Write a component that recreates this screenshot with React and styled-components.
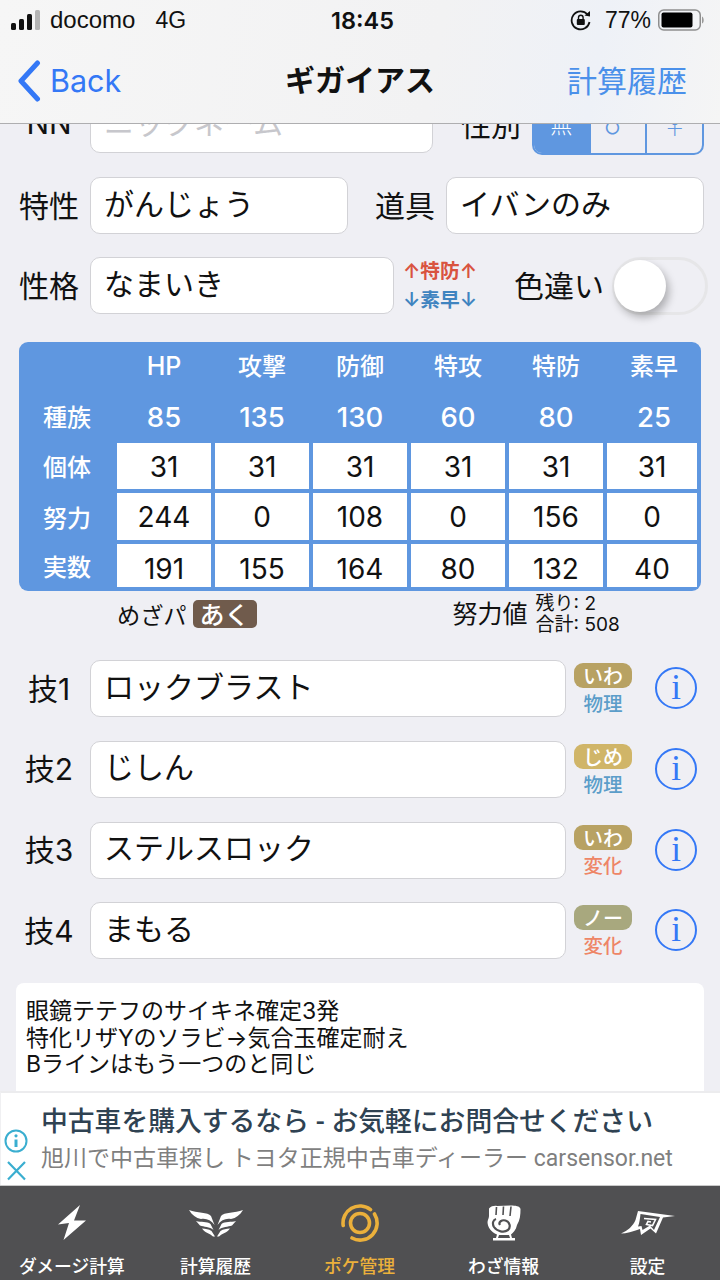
import React from 'react';
import styled, { createGlobalStyle } from 'styled-components';

const SANS = `Inter, "Noto Sans CJK JP", sans-serif`;
const BLUE = '#3478f6';
const TABLE_BLUE = '#5f97e0';

const GlobalStyle = createGlobalStyle`
  html, body { margin: 0; padding: 0; background: #efeff4; }
  * { box-sizing: border-box; }
`;

const Screen = styled.div`
  width: 720px;
  height: 1280px;
  display: flex;
  flex-direction: column;
  overflow: hidden;
  font-family: ${SANS};
  color: #111;
  background: #efeff4;
`;

// header
const Header = styled.header`
  height: 124px;
  flex: none;
  background: linear-gradient(100deg, #f6f6f6 0%, #f2f2f3 60%, #eef1f7 82%, #f5f5f5 100%);
  border-bottom: 1px solid #aeaeb0;
`;
const StatusBar = styled.div`
  height: 40px;
  padding: 0 15px 0 11px;
  display: flex;
  align-items: center;
  position: relative;
`;
const Carrier = styled.span`
  margin-left: 7px;
  font-family: "Liberation Sans", sans-serif;
  font-size: 24px;
`;
const Network = styled.span`
  margin-left: 20px;
  font-family: "Liberation Sans", sans-serif;
  font-size: 23px;
`;
const Clock = styled.span`
  position: absolute;
  left: 5px;
  right: 0;
  text-align: center;
  font-size: 23.5px;
  font-weight: 600;
  pointer-events: none;
`;
const StatusRight = styled.div`
  margin-left: auto;
  display: flex;
  align-items: center;
`;
const Percent = styled.span`
  margin: 0 7px 0 13px;
  font-family: "Liberation Sans", sans-serif;
  font-size: 23px;
`;
const NavBar = styled.nav`
  height: 83px;
  padding: 0 33px 2px 17px;
  display: flex;
  align-items: center;
  position: relative;
`;
const BackLabel = styled.span`
  margin-left: 9px;
  font-size: 30.5px;
  color: ${BLUE};
`;
const NavTitle = styled.h1`
  position: absolute;
  left: 0;
  right: 0;
  margin: 0;
  padding-bottom: 5px;
  text-align: center;
  font-size: 30px;
  font-weight: 700;
`;
const NavAction = styled.span`
  margin-left: auto;
  padding-bottom: 4px;
  font-size: 30px;
  color: #4a90ea;
`;

// scrolled content, sitting 28px past its top
const Main = styled.main`
  flex: 1;
  min-height: 0;
  overflow: hidden;
`;
const ScrollBody = styled.div`
  margin-top: -28px;
`;
const Row = styled.div`
  height: 57px;
  margin-top: ${(p) => p.$top || 0}px;
  padding: 0 16px 0 20px;
  display: flex;
  align-items: center;
`;
const FieldLabel = styled.span`
  flex: none;
  width: ${(p) => p.$width || 58}px;
  margin-left: ${(p) => p.$left || 0}px;
  margin-right: ${(p) => p.$right ?? 12}px;
  padding-bottom: 4px;
  display: flex;
  justify-content: center;
  font-size: 30px;
  white-space: nowrap;
`;
const Field = styled.div`
  flex: none;
  width: ${(p) => p.$width}px;
  height: 57px;
  padding: 0 13px 8px;
  display: flex;
  align-items: center;
  font-size: 30px;
  color: ${(p) => (p.$placeholder ? '#c7c7cc' : '#111')};
  background: #fff;
  border: 1px solid #d2d2d6;
  border-radius: 10px;
  white-space: nowrap;
`;
const GenderGroup = styled.div`
  flex: none;
  width: 172px;
  height: 50px;
  align-self: flex-end;
  margin-bottom: -2px;
  display: flex;
  border: 2px solid ${TABLE_BLUE};
  border-radius: 0 0 10px 10px;
  overflow: hidden;
`;
const GenderOption = styled.div`
  flex: 1;
  display: flex;
  align-items: center;
  justify-content: center;
  padding-bottom: ${(p) => p.$lift}px;
  font-size: ${(p) => p.$size}px;
  font-weight: 300;
  color: ${(p) => (p.$active ? '#fff' : TABLE_BLUE)};
  background: ${(p) => (p.$active ? TABLE_BLUE : 'transparent')};
  & + & { border-left: 2px solid ${TABLE_BLUE}; }
`;
const NatureNotes = styled.div`
  flex: none;
  width: 74px;
  margin-left: 9px;
  display: flex;
  flex-direction: column;
  gap: 6px;
`;
const NatureLine = styled.span`
  font-size: 19.7px;
  line-height: 23px;
  font-weight: 600;
  white-space: nowrap;
  color: ${(p) => p.$color};
`;
const Toggle = styled.div`
  flex: none;
  width: 96px;
  height: 58px;
  margin-left: 1px;
  margin-right: -5px;
  border: 3px solid #e6e6e8;
  border-radius: 29px;
  position: relative;
`;
const ToggleKnob = styled.div`
  position: absolute;
  left: -1px;
  top: 0;
  width: 52px;
  height: 52px;
  border-radius: 50%;
  background: #fff;
  box-shadow: 3px 5px 9px rgba(0, 0, 0, 0.28);
`;

// stats table
const StatTable = styled.div`
  margin: 28px 19px 0;
  padding: 0 4px 4px 0;
  display: grid;
  grid-template-columns: repeat(6, 94px) 90px;
  grid-template-rows: 48px 45px 46px 47px 43px;
  gap: 4px;
  background: ${TABLE_BLUE};
  border-radius: 9px;
  overflow: hidden;
`;
const HeadCell = styled.div`
  display: flex;
  align-items: center;
  justify-content: center;
  font-size: ${(p) => p.$size || 24}px;
  font-weight: 500;
  color: #fff;
  padding-left: ${(p) => p.$shift || 0}px;
  padding-bottom: ${(p) => p.$lift || 0}px;
`;
const ValueCell = styled.div`
  display: flex;
  align-items: center;
  justify-content: center;
  padding-top: ${(p) => p.$nudge || 1}px;
  font-size: 28px;
  background: #fff;
`;

const Summary = styled.div`
  height: 28px;
  margin-top: 9px;
  padding-left: 117px;
  display: flex;
  align-items: center;
`;
const SummaryText = styled.span`
  font-size: 23.2px;
  white-space: nowrap;
`;
const HiddenType = styled.span`
  width: 64px;
  height: 28px;
  margin-left: 6px;
  padding-bottom: 2px;
  display: flex;
  align-items: center;
  justify-content: center;
  font-size: 25px;
  font-weight: 500;
  color: #fff;
  background: #705b4c;
  border-radius: 5px;
`;
const EffortLabel = styled.span`
  margin-left: 196px;
  padding-bottom: 4px;
  font-size: 25px;
  white-space: nowrap;
`;
const EffortTotals = styled.div`
  margin-left: 8px;
  font-size: 19px;
  line-height: 21px;
  white-space: nowrap;
`;

// moves
const MoveList = styled.div`
  margin-top: 32px;
  display: grid;
  row-gap: 23.8px;
`;
const MoveRow = styled.div`
  height: 57px;
  padding-left: 20px;
  display: flex;
`;
const MoveLabel = styled.span`
  width: 58px;
  margin-right: 12px;
  padding-bottom: 4px;
  align-self: center;
  text-align: center;
  font-size: 30px;
  white-space: nowrap;
`;
const MoveMeta = styled.div`
  width: 58px;
  margin-left: 8px;
  padding-top: 3px;
  display: flex;
  flex-direction: column;
  align-items: center;
`;
const TypeBadge = styled.span`
  width: 58px;
  height: 25px;
  display: flex;
  align-items: center;
  justify-content: center;
  font-size: 20px;
  font-weight: 500;
  color: #fff;
  background: ${(p) => p.$color};
  border-radius: 9px;
`;
const Category = styled.span`
  height: 32px;
  display: flex;
  align-items: center;
  font-size: 19.5px;
  font-weight: 500;
  color: ${(p) => (p.$kind === '物理' ? '#5b9dc9' : '#ee8566')};
`;
const InfoButton = styled.div`
  width: 42px;
  height: 42px;
  margin: 7px 0 0 23px;
  display: flex;
  align-items: center;
  justify-content: center;
  font-family: "Liberation Serif", serif;
  font-size: 35px;
  color: ${BLUE};
  border: 2px solid ${BLUE};
  border-radius: 50%;
`;
const Notes = styled.div`
  height: 140px;
  margin: 24px 16px 0;
  padding: 15px 10px;
  font-size: 23px;
  line-height: 26.5px;
  background: #fff;
  border-radius: 8px;
  white-space: pre-line;
`;

// ad banner
const AdBanner = styled.aside`
  height: 94px;
  flex: none;
  padding: 11px 0 0 40px;
  position: relative;
  background: #fff;
  border-top: 2px solid #ececee;
  border-left: 1px solid #f0f0f2;
`;
const AdIcons = styled.div`
  position: absolute;
  left: 3px;
  top: 36px;
  display: flex;
  flex-direction: column;
  gap: 8px;
`;
const AdTitle = styled.div`
  font-family: Roboto, "Noto Sans CJK JP", sans-serif;
  font-size: 26.8px;
  line-height: 36px;
  font-weight: 500;
  color: #2f4252;
  white-space: nowrap;
`;
const AdSub = styled.div`
  margin-top: 4px;
  font-family: Roboto, "Noto Sans CJK JP", sans-serif;
  font-size: 23px;
  line-height: 30px;
  color: #7f7f7f;
  white-space: nowrap;
`;

// tab bar
const TabBar = styled.footer`
  height: 95px;
  flex: none;
  display: grid;
  grid-template-columns: 144px 143px 145px 143px 145px;
  background: #505052;
  border-top: 1px solid #c9c9c9;
`;
const Tab = styled.div`
  display: flex;
  flex-direction: column;
  align-items: center;
  color: ${(p) => (p.$active ? '#ebb03b' : '#fff')};
`;
const TabIcon = styled.div`
  height: 70px;
  display: flex;
  align-items: center;
  padding-top: 4px;
`;
const TabLabel = styled.span`
  font-size: 17.8px;
  line-height: 22px;
  font-weight: 500;
  white-space: nowrap;
`;

const SignalIcon = () => (
  <svg width="32" height="22" viewBox="0 0 32 22">
    <rect x="0" y="14" width="5" height="7" rx="1.5" fill="#111" />
    <rect x="8" y="10" width="5" height="11" rx="1.5" fill="#111" />
    <rect x="16" y="5" width="5" height="16" rx="1.5" fill="#111" />
    <rect x="24" y="1" width="5" height="20" rx="1.5" fill="#b5b5b5" />
  </svg>
);

const RotationLockIcon = () => (
  <svg width="22" height="22" viewBox="0 0 22 22">
    <path d="M17.5 5.5A9 9 0 1 0 19.5 13" fill="none" stroke="#111" strokeWidth="1.8" />
    <path d="M14.5 6.5L20 7.5L20 2Z" fill="#111" />
    <rect x="6.8" y="10" width="8" height="6" rx="1" fill="#111" />
    <path d="M8.5 10V8.5a2.3 2.3 0 0 1 4.6 0V10" fill="none" stroke="#111" strokeWidth="1.4" />
  </svg>
);

const BatteryIcon = () => (
  <svg width="47" height="22" viewBox="0 0 47 22">
    <rect x="0.75" y="1" width="41.5" height="20" rx="5" fill="none" stroke="#8e8e8e" strokeWidth="1.5" />
    <rect x="3.5" y="3.5" width="31" height="15" rx="2" fill="#000" />
    <path d="M44 7.5c2 .6 2.500 6.400 0 7z" fill="#999" />
  </svg>
);

const BackChevron = () => (
  <svg width="24" height="56" viewBox="0 0 24 56">
    <path d="M20.500 10L4 28l16.500 18" fill="none" stroke={BLUE} strokeWidth="5" strokeLinecap="round" strokeLinejoin="round" />
  </svg>
);

const BoltIcon = () => (
  <svg width="30" height="36" viewBox="0 0 30 36" fill="#fff">
    <path d="M23 0L1 19.500L12 18L6.500 35L29 15.500L17 15.500Z" />
  </svg>
);

const WingsIcon = () => (
  <svg width="54" height="28" viewBox="0 0 54 28" fill="#fff">
    <g>
      <path d="M0 1C8 4 19 3 22 7L25.500 16C22 11 17 9 12 10C7 9 3 6 0 1Z" />
      <path d="M7 12C12 13.500 18 12 21.500 15L24.500 21C20.500 17.500 15 18 11 16.500Z" />
      <path d="M13 19.500C17 20 19.500 20 22.500 22L26 27.500L24 27.500C21 24.500 16 24 13 19.500Z" />
    </g>
    <g transform="matrix(-1 0 0 1 54 0)">
      <path d="M0 1C8 4 19 3 22 7L25.500 16C22 11 17 9 12 10C7 9 3 6 0 1Z" />
      <path d="M7 12C12 13.500 18 12 21.500 15L24.500 21C20.500 17.500 15 18 11 16.500Z" />
      <path d="M13 19.500C17 20 19.500 20 22.500 22L26 27.500L24 27.500C21 24.500 16 24 13 19.500Z" />
    </g>
  </svg>
);

const RingIcon = () => (
  <svg width="38" height="38" viewBox="0 0 38 38" fill="none" stroke="#ebb03b" strokeWidth="3.600" strokeLinecap="round">
    <circle cx="19" cy="19" r="9.500" />
    <path d="M29.500 5.600A17 17 0 0 0 2.200 21.500" />
    <path d="M33.500 10A17 17 0 0 1 11 34" />
  </svg>
);

const FistIcon = () => (
  <svg width="34" height="36" viewBox="0 0 34 36">
    <path d="M2 3.500C4 1 8 .5 10 1L24 .5C28 .5 33 1 33.500 4C33.500 10 33 15 30 20C29 25 26 28 24 29.500L25 33H28V35.500H6V33H9L10 29.500C4 27 .5 22 .5 17C1 14 2 13 2 11Z" fill="#fff" />
    <path d="M9.500 2L9 10M16.500 1.500L16 10M24 1.500L23 11" stroke="#505052" strokeWidth="1.600" fill="none" />
    <path d="M13 20C11 17 15 14.500 18.500 15.500C23 17 24 22 21 25C17 28 10 26.500 7 22C5 18.500 6 15 9 14" stroke="#505052" strokeWidth="2.200" fill="none" />
    <path d="M12 30H22L23 33H11Z" fill="#505052" />
  </svg>
);

const CrestIcon = () => (
  <svg width="54" height="26" viewBox="0 0 54 26">
    <path d="M17 1L54 6L42 7.500L35 23.500L29.500 18.500L20 25L19 19C12 21.500 5 23.500 0 23.500C7 20.500 12 16 14.500 10Z" fill="#fff" />
    <path d="M19.500 4L39 7L33 20L29 15.500L21.500 20L20.500 16L17 16.500C18.500 13 19 8 19.500 4Z" fill="#505052" />
    <path d="M23 8.500L34.500 9.500L31.500 15.500L25.500 14.500L27 11.500L30 12" fill="none" stroke="#fff" strokeWidth="1.600" />
  </svg>
);

const AdInfoIcon = () => (
  <svg width="24" height="24" viewBox="0 0 24 24" fill="none" stroke="#3aaed0" strokeWidth="2">
    <circle cx="12" cy="12" r="10.500" />
    <path d="M12 10.500V18" strokeWidth="3" />
    <circle cx="12" cy="6.800" r="1.600" fill="#3aaed0" stroke="none" />
  </svg>
);

const AdCloseIcon = () => (
  <svg width="24" height="20" viewBox="0 0 24 20" fill="none" stroke="#3aaed0" strokeWidth="2.200">
    <path d="M4 1L21 18.500M21 1L4 18.500" />
  </svg>
);

const statColumns = ['HP', '攻撃', '防御', '特攻', '特防', '素早'];
const statRows = [
  { label: '個体', values: [31, 31, 31, 31, 31, 31] },
  { label: '努力', values: [244, 0, 108, 0, 156, 0] },
  { label: '実数', values: [191, 155, 164, 80, 132, 40], nudge: 6 },
];
const baseStats = [85, 135, 130, 60, 80, 25];

const moves = [
  { label: '技1', name: 'ロックブラスト', type: 'いわ', color: '#b8a263', kind: '物理' },
  { label: '技2', name: 'じしん', type: 'じめ', color: '#d0b568', kind: '物理' },
  { label: '技3', name: 'ステルスロック', type: 'いわ', color: '#b8a263', kind: '変化' },
  { label: '技4', name: 'まもる', type: 'ノー', color: '#a8a87e', kind: '変化' },
];

const tabs = [
  { label: 'ダメージ計算', Icon: BoltIcon },
  { label: '計算履歴', Icon: WingsIcon },
  { label: 'ポケ管理', Icon: RingIcon, active: true },
  { label: 'わざ情報', Icon: FistIcon },
  { label: '設定', Icon: CrestIcon },
];

const App = () => (
  <Screen>
    <GlobalStyle />
    <Header>
      <StatusBar>
        <SignalIcon />
        <Carrier>docomo</Carrier>
        <Network>4G</Network>
        <Clock>18:45</Clock>
        <StatusRight>
          <RotationLockIcon />
          <Percent>77%</Percent>
          <BatteryIcon />
        </StatusRight>
      </StatusBar>
      <NavBar>
        <BackChevron />
        <BackLabel>Back</BackLabel>
        <NavTitle>ギガイアス</NavTitle>
        <NavAction>計算履歴</NavAction>
      </NavBar>
    </Header>

    <Main>
      <ScrollBody>
        <Row>
          <FieldLabel>NN</FieldLabel>
          <Field $width={343} $placeholder>ニックネーム</Field>
          <FieldLabel $left={29} $width={58}>性別</FieldLabel>
          <GenderGroup>
            <GenderOption $active $size={22} $lift={14}>無</GenderOption>
            <GenderOption $size={32} $lift={20}>♂</GenderOption>
            <GenderOption $size={22} $lift={12}>♀</GenderOption>
          </GenderGroup>
        </Row>
        <Row $top={24}>
          <FieldLabel>特性</FieldLabel>
          <Field $width={258}>がんじょう</Field>
          <FieldLabel $left={27} $width={60} $right={11}>道具</FieldLabel>
          <Field $width={258}>イバンのみ</Field>
        </Row>
        <Row $top={23}>
          <FieldLabel>性格</FieldLabel>
          <Field $width={304}>なまいき</Field>
          <NatureNotes>
            <NatureLine $color="#d9533f">↑特防↑</NatureLine>
            <NatureLine $color="#3f84c0">↓素早↓</NatureLine>
          </NatureNotes>
          <FieldLabel $left={37} $width={90} $right={7}>色違い</FieldLabel>
          <Toggle>
            <ToggleKnob />
          </Toggle>
        </Row>

        <StatTable>
          <HeadCell />
          {statColumns.map((name, i) => (
            <HeadCell key={name} $lift={i === 0 ? 0 : 4} $shift={i === 5 ? 4 : 0} $size={i === 0 ? 25 : 24}>
              {name}
            </HeadCell>
          ))}
          <HeadCell $shift={2} $lift={2}>種族</HeadCell>
          {baseStats.map((value, i) => (
            <HeadCell key={i} $size={27.5} $shift={i === 5 ? 4 : 0}>{value}</HeadCell>
          ))}
          {statRows.map(({ label, values, nudge }) => (
            <React.Fragment key={label}>
              <HeadCell $shift={2} $lift={1}>{label}</HeadCell>
              {values.map((value, i) => (
                <ValueCell key={i} $nudge={nudge}>{value}</ValueCell>
              ))}
            </React.Fragment>
          ))}
        </StatTable>

        <Summary>
          <SummaryText>めざパ</SummaryText>
          <HiddenType>あく</HiddenType>
          <EffortLabel>努力値</EffortLabel>
          <EffortTotals>
            <div>残り: 2</div>
            <div>合計: 508</div>
          </EffortTotals>
        </Summary>

        <MoveList>
          {moves.map((move) => (
            <MoveRow key={move.label}>
              <MoveLabel>{move.label}</MoveLabel>
              <Field $width={476}>{move.name}</Field>
              <MoveMeta>
                <TypeBadge $color={move.color}>{move.type}</TypeBadge>
                <Category $kind={move.kind}>{move.kind}</Category>
              </MoveMeta>
              <InfoButton>i</InfoButton>
            </MoveRow>
          ))}
        </MoveList>

        <Notes>{'眼鏡テテフのサイキネ確定3発\n特化リザYのソラビ→気合玉確定耐え\nBラインはもう一つのと同じ'}</Notes>
      </ScrollBody>
    </Main>

    <AdBanner>
      <AdIcons>
        <AdInfoIcon />
        <AdCloseIcon />
      </AdIcons>
      <AdTitle>中古車を購入するなら - お気軽にお問合せください</AdTitle>
      <AdSub>旭川で中古車探し トヨタ正規中古車ディーラー carsensor.net</AdSub>
    </AdBanner>

    <TabBar>
      {tabs.map(({ label, Icon, active }) => (
        <Tab key={label} $active={active}>
          <TabIcon>
            <Icon />
          </TabIcon>
          <TabLabel>{label}</TabLabel>
        </Tab>
      ))}
    </TabBar>
  </Screen>
);

export default App;
